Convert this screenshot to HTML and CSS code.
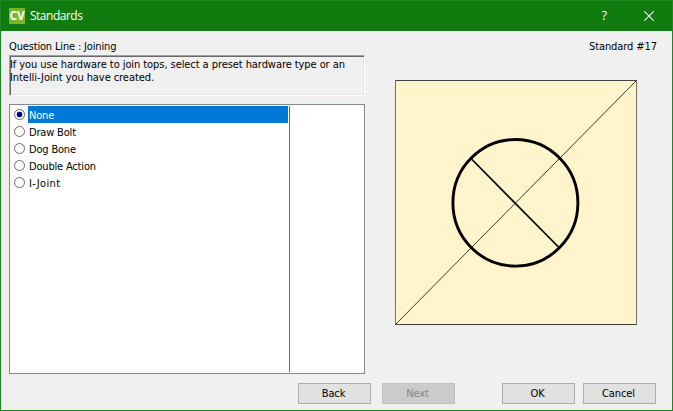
FILE: index.html
```html
<!DOCTYPE html>
<html lang="en">
<head>
<meta charset="utf-8">
<title>Standards</title>
<link rel="stylesheet" href="styles.css">
</head>
<body>
<div class="window">
  <header class="titlebar">
    <span class="logo">CV</span>
    <span class="title">Standards</span>
    <span class="help">?</span>
    <svg class="close" width="10" height="10" viewBox="0 0 10 10"><path d="M0.3 0.3L9.7 9.7M9.7 0.3L0.3 9.7" stroke="#fff" stroke-width="1.1" fill="none"/></svg>
  </header>
  <main class="content">
    <section class="left">
      <div class="question">Question Line : Joining</div>
      <div class="hint">If you use hardware to join tops, select a preset hardware type or an<br>Intelli-Joint you have created.</div>
      <div class="list">
        <ul class="options">
          <li class="option selected"><i class="radio"></i><span class="label">None</span></li>
          <li class="option"><i class="radio"></i><span class="label">Draw Bolt</span></li>
          <li class="option"><i class="radio"></i><span class="label">Dog Bone</span></li>
          <li class="option"><i class="radio"></i><span class="label">Double Action</span></li>
          <li class="option"><i class="radio"></i><span class="label wide">I-Joint</span></li>
        </ul>
      </div>
    </section>
    <section class="right">
      <div class="standard">Standard #17</div>
      <svg class="preview" width="243" height="246" viewBox="395 80 243 246">
        <rect x="395" y="80" width="242" height="245" fill="#fff4cc"/>
        <path d="M395 80.5H637M395 324.5H637" stroke="#404040"/>
        <path d="M395.5 80V325M636.5 80V325" stroke="#77735f"/>
        <path d="M395.5 324.5L636.5 80.5" stroke="#252520" stroke-width="0.9"/>
        <path d="M471 158.5L559 247.5" stroke="#000" stroke-width="1.7"/>
        <ellipse cx="515.4" cy="202.8" rx="62.5" ry="63.3" fill="none" stroke="#000" stroke-width="2.9"/>
      </svg>
    </section>
  </main>
  <footer class="buttons">
    <button class="back">Back</button>
    <button class="next" disabled>Next</button>
    <button class="ok">OK</button>
    <button class="cancel">Cancel</button>
  </footer>
</div>
</body>
</html>
```
FILE: styles.css
```css
* { box-sizing: border-box; }
body { margin: 0; }
.window {
  width: 673px;
  height: 411px;
  background: #f0f0f0;
  border: 1px solid #208523;
  display: flex;
  flex-direction: column;
  font: 11px/13px "DejaVu Sans Condensed", "DejaVu Sans", sans-serif;
  color: #000;
  white-space: nowrap;
  overflow: hidden;
}
.titlebar {
  height: 30px;
  flex: none;
  background: #107c10;
  color: #fff;
  display: flex;
  align-items: center;
  padding: 0 18px 0 8px;
  font: 12px/16px "Open Sans", sans-serif;
}
.logo {
  width: 16px;
  height: 16px;
  margin-right: 5px;
  margin-top: -1px;
  background: #76b82a;
  font: bold 12px/15px "Open Sans", sans-serif;
  letter-spacing: -0.3px;
  text-align: center;
}
.title { flex: 1; letter-spacing: -0.5px; }
.help { margin-right: 37px; margin-top: -2px; font-size: 13px; }
.close { margin-top: -1px; }
.content { display: flex; height: 343px; flex: none; padding: 9px 15px 0 8px; }
.left { width: 356px; margin-right: 30px; }
.right { flex: 1; }
.question, .standard { height: 13px; }
.question { letter-spacing: -0.16px; }
.standard { text-align: right; letter-spacing: -0.08px; }
.hint {
  height: 41px;
  margin-top: 2px;
  border: 1px solid;
  border-color: #a0a0a0 #fff #fff #a0a0a0;
  box-shadow: inset 1px 1px #696969, inset -1px -1px #e3e3e3;
  padding: 2px 0 0 0;
  letter-spacing: -0.07px;
}
.list {
  height: 270px;
  margin-top: 8px;
  border: 1px solid #828790;
  background: #fff;
  padding: 1px;
}
.options {
  list-style: none;
  margin: 0;
  padding: 0 1px 0 2px;
  width: 279px;
  height: 266px;
  border-right: 1px solid #696969;
}
.option { height: 17px; display: flex; align-items: center; }
.radio {
  width: 11px;
  height: 11px;
  margin: 0 3px 0 1px;
  border: 1px solid #6b6b6b;
  border-radius: 50%;
  background: #fff;
}
.label { flex: 1; height: 17px; line-height: 19px; padding-left: 1px; letter-spacing: -0.18px; }
.wide { letter-spacing: 0.35px; }
.selected .radio { background: radial-gradient(circle, #000080 2.5px, #fff 3.2px); }
.selected .label { background: #0078d7; color: #fff; }
.preview { display: block; margin-top: 27px; }
.buttons { display: flex; padding: 9px 0 0 297px; }
button {
  width: 73px;
  height: 21px;
  padding: 0 2px 0 0;
  border: 1px solid #adadad;
  background: #e1e1e1;
  color: #000;
  font: inherit;
  letter-spacing: -0.1px;
}
.next { margin-left: 11px; background: #ccc; border-color: #bfbfbf; color: #838383; }
.ok { margin-left: 47px; }
.cancel { margin-left: 8px; }
```
